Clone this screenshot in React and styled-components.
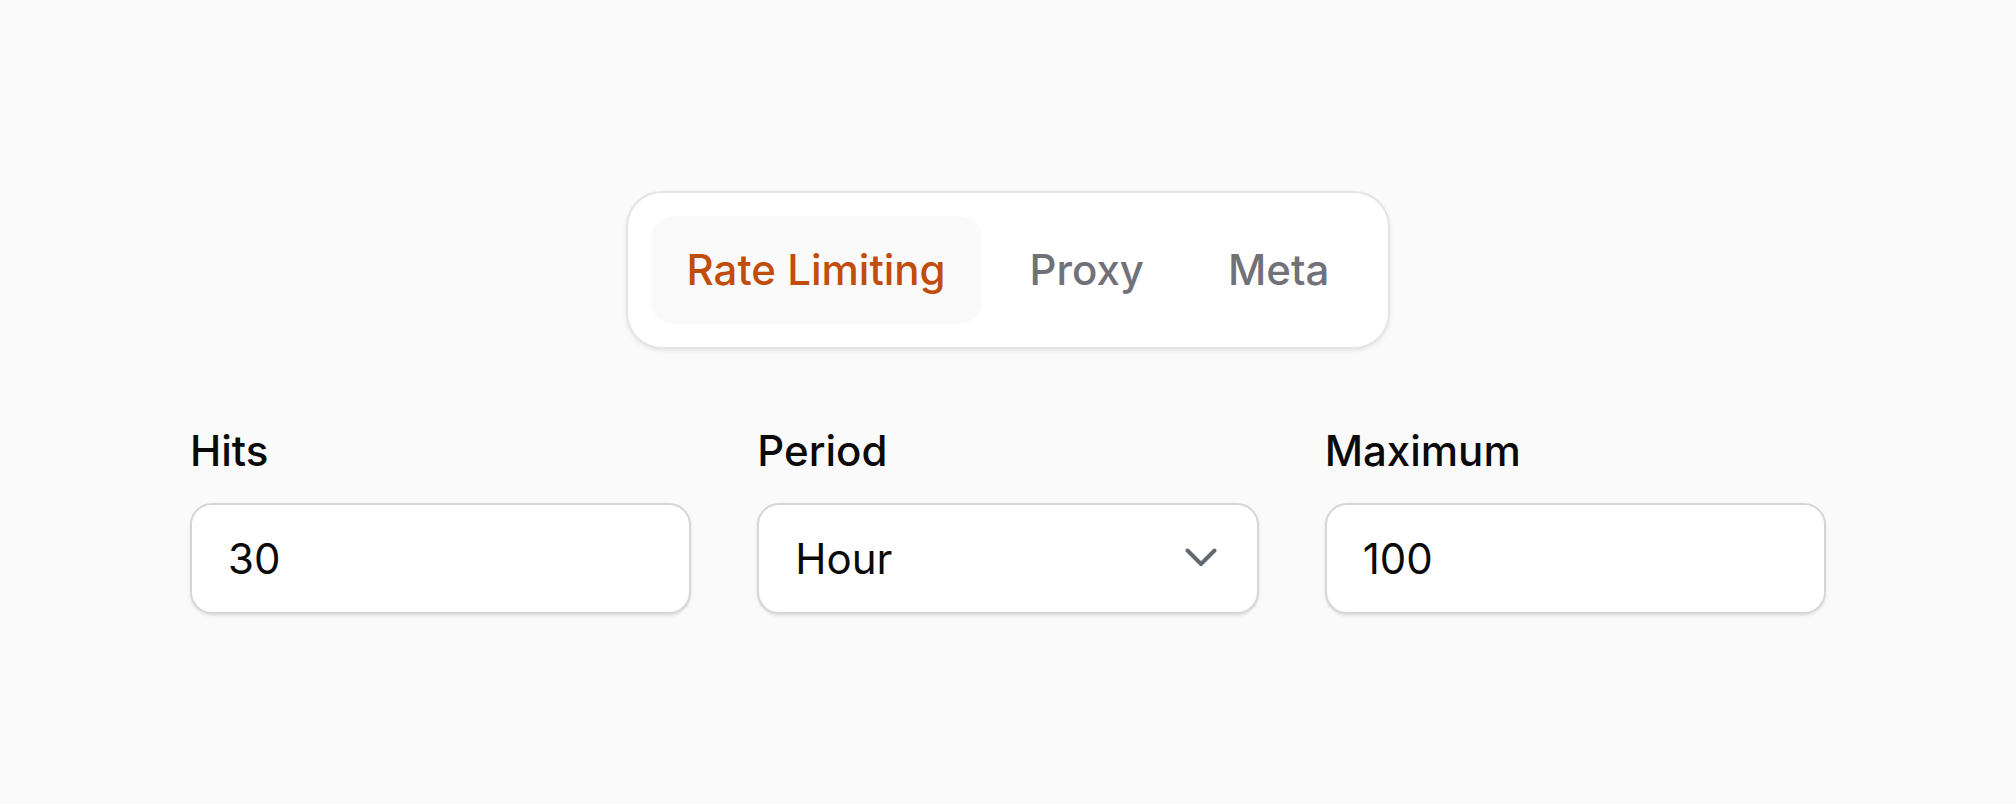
import React, { useState } from "react";
import styled, { createGlobalStyle } from "styled-components";

const GlobalStyle = createGlobalStyle`
  * { box-sizing: border-box; }
  html, body { margin: 0; padding: 0; background: #fafafa; }
  body { font-family: Inter, "Noto Sans", "Liberation Sans", sans-serif; color: #09090b; }
`;

const Page = styled.main`
  min-height: 100vh;
  display: flex;
  flex-direction: column;
  align-items: center;
  justify-content: center;
  gap: 70px;
`;

const TabList = styled.div`
  display: flex;
  align-items: center;
  gap: 12px;
  padding: 23px;
  background: #ffffff;
  border: 2px solid #e4e4e7;
  border-radius: 36px;
  box-shadow: 0 2px 4px rgba(0, 0, 0, 0.08);
`;

const Tab = styled.button`
  height: 108px;
  padding: 0 36px;
  display: flex;
  align-items: center;
  border: none;
  border-radius: 22px;
  background: ${(p) => (p.$active ? "#fafafa" : "transparent")};
  color: ${(p) => (p.$active ? "#c04d0b" : "#71717a")};
  font-family: inherit;
  font-size: 42px;
  font-weight: 500;
  line-height: 1;
  cursor: pointer;
`;

const Fields = styled.div`
  width: 1636px;
  display: grid;
  grid-template-columns: repeat(3, 1fr);
  gap: 66px;
`;

const Field = styled.div`
  display: flex;
  flex-direction: column;
  gap: 21px;
`;

const Label = styled.label`
  font-size: 42px;
  font-weight: 500;
  line-height: 63px;
  color: #0a0a0a;
`;

const boxStyles = `
  height: 111px;
  width: 100%;
  padding: 0 36px;
  background: #ffffff;
  border: 2px solid #d6d6d9;
  border-radius: 22px;
  box-shadow: 0 2px 3px rgba(0, 0, 0, 0.1);
  font-family: inherit;
  font-size: 42px;
  font-weight: 400;
  color: #0a0a0a;
`;

const TextInput = styled.input`
  ${boxStyles}
  outline: none;
`;

const SelectBox = styled.div`
  ${boxStyles}
  display: flex;
  align-items: center;
  justify-content: space-between;
  padding-right: 40px;
  cursor: pointer;
`;

const Chevron = styled.svg`
  width: 32px;
  height: 20px;
  flex: none;
`;

export default function App() {
  const [active, setActive] = useState("Rate Limiting");
  const tabs = ["Rate Limiting", "Proxy", "Meta"];
  return (
    <>
      <GlobalStyle />
      <Page>
        <TabList role="tablist">
          {tabs.map((t) => (
            <Tab key={t} $active={t === active} onClick={() => setActive(t)}>
              {t}
            </Tab>
          ))}
        </TabList>
        <Fields>
          <Field>
            <Label htmlFor="hits">Hits</Label>
            <TextInput id="hits" defaultValue="30" />
          </Field>
          <Field>
            <Label>Period</Label>
            <SelectBox role="combobox">
              <span>Hour</span>
              <Chevron viewBox="0 0 32 20" fill="none">
                <polyline
                  points="2.5,2.5 16,16 29.5,2.5"
                  stroke="#636973"
                  strokeWidth="4"
                  strokeLinecap="round"
                  strokeLinejoin="round"
                />
              </Chevron>
            </SelectBox>
          </Field>
          <Field>
            <Label htmlFor="max">Maximum</Label>
            <TextInput id="max" defaultValue="100" />
          </Field>
        </Fields>
      </Page>
    </>
  );
}
